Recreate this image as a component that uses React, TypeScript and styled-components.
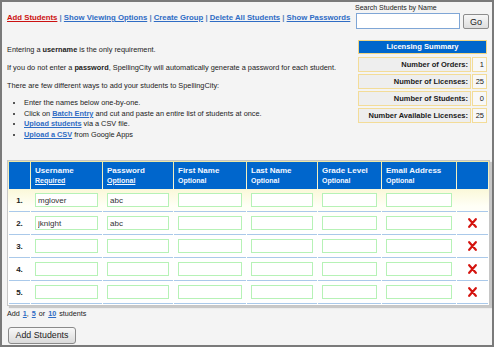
import React from "react";
import styled, { createGlobalStyle } from "styled-components";

const GlobalStyle = createGlobalStyle`
  html, body {
    margin: 0;
    padding: 0;
    background: #ffffff;
  }
  body {
    font-family: "Liberation Sans", Arial, sans-serif;
    color: #222;
  }
`;

const Frame = styled.div`
  box-sizing: border-box;
  width: 494px;
  height: 347px;
  border: 2px solid #7a7a7a;
  background: #f4f4f4;
  padding: 1px 3px 0 5px;
  font-size: 7.35px;
`;

const Top = styled.div`
  display: flex;
  justify-content: space-between;
  align-items: flex-start;
`;

const Intro = styled.div`
  padding-top: 10px;
`;

const Nav = styled.div`
  font-size: 7.75px;
  font-weight: bold;
  line-height: 10px;
  color: #5a7fb8;
  white-space: nowrap;
`;

const NavLink = styled.a<{ $active?: boolean }>`
  color: ${(p) => (p.$active ? "#cc1111" : "#2f6cc4")};
  text-decoration: underline;
  cursor: pointer;
`;

const Para = styled.p`
  margin: 8px 0 0;
  line-height: 10px;
  white-space: nowrap;
  &:first-of-type {
    margin-top: 22px;
  }
`;

const Bullets = styled.ul`
  margin: 7px 0 0;
  padding-left: 17px;
  line-height: 10.7px;
  white-space: nowrap;
`;

const InlineLink = styled.a`
  color: #2f6cc4;
  font-weight: bold;
  text-decoration: underline;
  cursor: pointer;
`;

const Side = styled.div`
  width: 134px;
  flex-shrink: 0;
  display: flex;
  flex-direction: column;
`;

const SearchLabel = styled.div`
  font-size: 7px;
  line-height: 10px;
`;

const SearchRow = styled.div`
  display: flex;
  align-items: flex-start;
  gap: 3px;
  margin-left: 1px;
`;

const SearchInput = styled.input`
  box-sizing: border-box;
  width: 104px;
  height: 16px;
  border: 1px solid #7fa6d6;
  background: #fff;
  padding: 0 3px;
  outline: none;
`;

const GoButton = styled.button`
  box-sizing: border-box;
  width: 26px;
  height: 15px;
  margin-top: 1px;
  padding: 0;
  border: 1px solid #8c8c8c;
  border-radius: 2px;
  background: linear-gradient(#f7f7f7, #dedede);
  font-family: "Liberation Sans", Arial, sans-serif;
  font-size: 9px;
  color: #222;
`;

const Summary = styled.div`
  margin: 11px 0 0 3px;
  width: 129px;
  display: grid;
  grid-template-columns: 1fr 15px;
  column-gap: 1px;
  row-gap: 2px;
`;

const SummaryHead = styled.div`
  grid-column: 1 / span 2;
  box-sizing: border-box;
  height: 14px;
  margin-bottom: 1px;
  background: #0066cc;
  border: 1px solid #f0d585;
  color: #fff;
  font-weight: bold;
  font-size: 7.6px;
  line-height: 12px;
  text-align: center;
`;

const SummaryCell = styled.div<{ $value?: boolean }>`
  box-sizing: border-box;
  height: 15px;
  border: 1px solid #f3dc98;
  background: ${(p) => (p.$value ? "#f8f8f8" : "#eeeeee")};
  font-size: 7.5px;
  font-weight: ${(p) => (p.$value ? "normal" : "bold")};
  line-height: 13px;
  text-align: right;
  padding-right: 2px;
  color: #1a1a1a;
`;

const TableShell = styled.div`
  margin-top: 19px;
  width: 483px;
  box-sizing: border-box;
  border: 1px solid #c6c6c6;
  box-shadow: 2px 2px 1px rgba(0, 0, 0, 0.18);
  background: linear-gradient(#ece7a4 0px, #fbf9dc 30px, #fffff6 45px, #ffffff 60px);
`;

const StudentTable = styled.table`
  width: 100%;
  border-collapse: separate;
  border-spacing: 1px;
  table-layout: fixed;
`;

const HeadCell = styled.th`
  height: 27px;
  box-sizing: border-box;
  background: #0066cc;
  color: #f2f6ff;
  text-align: left;
  vertical-align: top;
  padding: 4px 0 0 4px;
  font-weight: bold;
  font-size: 8px;
  line-height: 10px;
`;

const SubLabel = styled.span<{ $underline?: boolean }>`
  display: block;
  font-size: 7px;
  text-decoration: ${(p) => (p.$underline ? "underline" : "none")};
`;

const Cell = styled.td`
  height: 22px;
  box-sizing: border-box;
  border-bottom: 1px solid #aac9ea;
  padding: 0 4px 0 4px;
  vertical-align: middle;
`;

const NumCell = styled(Cell)`
  text-align: center;
  font-weight: bold;
  font-size: 8px;
  padding: 0;
`;

const DelCell = styled(Cell)`
  text-align: center;
  padding: 0;
`;

const FieldInput = styled.input`
  box-sizing: border-box;
  display: block;
  width: 100%;
  height: 14px;
  border: 1px solid #b6f2b6;
  background: #fff;
  padding: 0 2px;
  font-family: "Liberation Sans", Arial, sans-serif;
  font-size: 8px;
  color: #333;
  outline: none;
`;

const AddMore = styled.div`
  margin-top: 3px;
  font-size: 7.2px;
  line-height: 10px;
  word-spacing: 1px;
`;

const SubmitButton = styled.button`
  display: block;
  box-sizing: border-box;
  margin: 8px 0 0 1px;
  width: 68px;
  height: 17px;
  padding: 0;
  border: 1px solid #8a8a8a;
  border-radius: 3px;
  background: linear-gradient(#f8f8f8, #dadada);
  font-family: "Liberation Sans", Arial, sans-serif;
  font-size: 8.8px;
  color: #222;
`;

const RemoveIcon = () => (
  <svg width="9" height="10" viewBox="0 0 9 10" style={{ display: "inline-block", verticalAlign: "middle" }}>
    <path d="M1.2 1.2 L7.8 8.8 M7.8 1.2 L1.2 8.8" stroke="#d4140f" strokeWidth="2.2" strokeLinecap="round" fill="none" />
  </svg>
);

const columns = [
  { title: "Username", sub: "Required", underline: true, width: 71 },
  { title: "Password", sub: "Optional", underline: true, width: 70 },
  { title: "First Name", sub: "Optional", underline: false, width: 72 },
  { title: "Last Name", sub: "Optional", underline: false, width: 70 },
  { title: "Grade Level", sub: "Optional", underline: false, width: 63 },
  { title: "Email Address", sub: "Optional", underline: false, width: 74 },
];

const students = [
  { username: "mglover", password: "abc" },
  { username: "jknight", password: "abc" },
  { username: "", password: "" },
  { username: "", password: "" },
  { username: "", password: "" },
];

const summary = [
  ["Number of Orders:", "1"],
  ["Number of Licenses:", "25"],
  ["Number of Students:", "0"],
  ["Number Available Licenses:", "25"],
];

export default function App() {
  return (
    <>
      <GlobalStyle />
      <Frame>
        <Top>
          <Intro>
            <Nav>
              <NavLink $active>Add Students</NavLink> | <NavLink>Show Viewing Options</NavLink> |{" "}
              <NavLink>Create Group</NavLink> | <NavLink>Delete All Students</NavLink> |{" "}
              <NavLink>Show Passwords</NavLink>
            </Nav>
            <Para>
              Entering a <b>username</b> is the only requirement.
            </Para>
            <Para>
              If you do not enter a <b>password</b>, SpellingCity will automatically generate a password for each student.
            </Para>
            <Para>There are few different ways to add your students to SpellingCity:</Para>
            <Bullets>
              <li>Enter the names below one-by-one.</li>
              <li>
                Click on <InlineLink>Batch Entry</InlineLink> and cut and paste an entire list of students at once.
              </li>
              <li>
                <InlineLink>Upload students</InlineLink> via a CSV file.
              </li>
              <li>
                <InlineLink>Upload a CSV</InlineLink> from Google Apps
              </li>
            </Bullets>
          </Intro>
          <Side>
            <SearchLabel>Search Students by Name</SearchLabel>
            <SearchRow>
              <SearchInput type="text" />
              <GoButton>Go</GoButton>
            </SearchRow>
            <Summary>
              <SummaryHead>Licensing Summary</SummaryHead>
              {summary.map(([label, value]) => (
                <React.Fragment key={label}>
                  <SummaryCell>{label}</SummaryCell>
                  <SummaryCell $value>{value}</SummaryCell>
                </React.Fragment>
              ))}
            </Summary>
          </Side>
        </Top>

        <TableShell>
          <StudentTable>
            <colgroup>
              <col style={{ width: 21 }} />
              {columns.map((c) => (
                <col key={c.title} style={{ width: c.width }} />
              ))}
              <col style={{ width: 31 }} />
            </colgroup>
            <thead>
              <tr>
                <HeadCell />
                {columns.map((c) => (
                  <HeadCell key={c.title}>
                    {c.title}
                    <SubLabel $underline={c.underline}>{c.sub}</SubLabel>
                  </HeadCell>
                ))}
                <HeadCell />
              </tr>
            </thead>
            <tbody>
              {students.map((s, i) => (
                <tr key={i}>
                  <NumCell>{i + 1}.</NumCell>
                  <Cell>
                    <FieldInput defaultValue={s.username} />
                  </Cell>
                  <Cell>
                    <FieldInput defaultValue={s.password} />
                  </Cell>
                  <Cell>
                    <FieldInput />
                  </Cell>
                  <Cell>
                    <FieldInput />
                  </Cell>
                  <Cell>
                    <FieldInput />
                  </Cell>
                  <Cell>
                    <FieldInput />
                  </Cell>
                  <DelCell>{i > 0 && <RemoveIcon />}</DelCell>
                </tr>
              ))}
            </tbody>
          </StudentTable>
        </TableShell>

        <AddMore>
          Add <InlineLink>1</InlineLink>, <InlineLink>5</InlineLink> or <InlineLink>10</InlineLink> students
        </AddMore>
        <SubmitButton>Add Students</SubmitButton>
      </Frame>
    </>
  );
}
